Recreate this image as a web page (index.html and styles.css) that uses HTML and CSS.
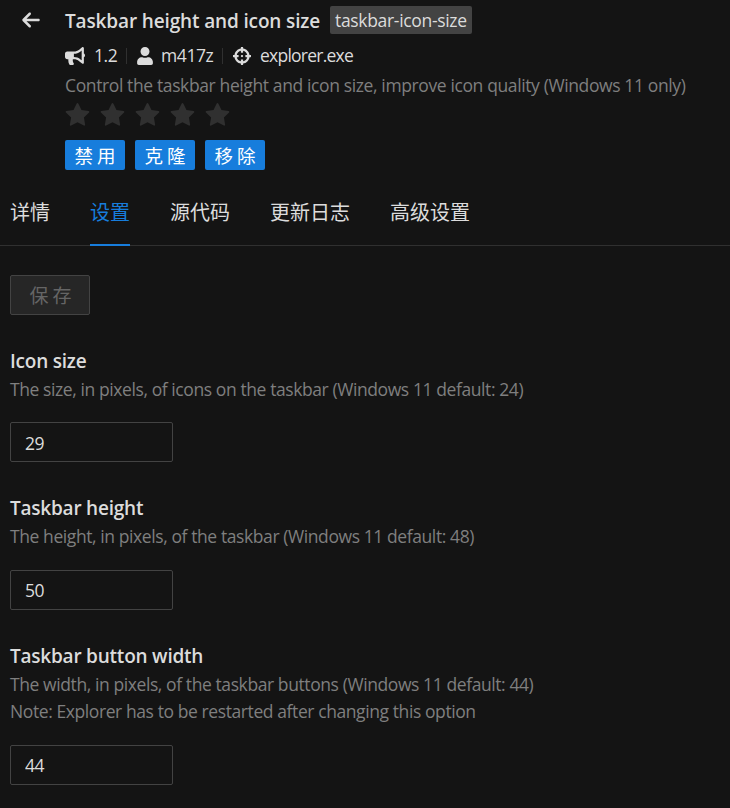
FILE: index.html
```html
<!DOCTYPE html>
<html lang="zh-CN">
<head>
<meta charset="utf-8">
<title>Taskbar height and icon size</title>
<link rel="stylesheet" href="styles.css">
</head>
<body>
<svg class="defs" aria-hidden="true">
  <symbol id="star" viewBox="64 64 896 896"><path d="M908.1 353.1l-253.9-36.9L540.7 86.1c-3.1-6.3-8.2-11.4-14.5-14.5-15.8-7.8-35-1.3-42.9 14.5L369.8 316.2l-253.9 36.9c-7 1-13.4 4.3-18.3 9.3a32.05 32.05 0 00.6 45.3l183.7 179.1-43.4 252.9a31.95 31.95 0 0046.4 33.7L512 754l227.1 119.4c6.2 3.3 13.4 4.4 20.3 3.2 17.4-3 29.1-19.5 26.1-36.9l-43.4-252.9 183.7-179.1c5-4.9 8.3-11.3 9.3-18.3 2.7-17.5-9.5-33.7-27-36.3z"/></symbol>
</svg>
<header class="header">
  <a class="back"><svg viewBox="0 0 448 512"><path d="M9.4 233.4c-12.5 12.5-12.5 32.8 0 45.3l160 160c12.5 12.5 32.8 12.5 45.3 0s12.5-32.8 0-45.3L109.2 288 416 288c17.7 0 32-14.3 32-32s-14.3-32-32-32l-306.7 0L214.6 118.6c12.5-12.5 12.5-32.8 0-45.3s-32.8-12.5-45.3 0l-160 160z"/></svg></a>
  <div class="info">
    <div class="title-row"><h1 class="title">Taskbar height and icon size</h1><span class="mod-id">taskbar-icon-size</span></div>
    <div class="meta">
      <svg class="icon icon-version" viewBox="0 0 576 512"><path d="M576 240c0-23.63-12.95-44.04-32-55.12V32.01C544 23.26 537.02 0 512 0c-7.12 0-14.19 2.38-19.98 7.02l-85.03 68.03C364.28 109.19 310.66 128 256 128H64c-35.35 0-64 28.65-64 64v96c0 35.35 28.65 64 64 64h33.7c-1.39 10.48-2.18 21.14-2.18 32 0 39.77 9.26 77.35 25.56 110.94 5.19 10.69 16.52 17.06 28.4 17.06h74.28c26.05 0 41.69-29.84 25.9-50.56-16.4-21.52-26.15-48.36-26.15-77.44 0-11.11 1.62-21.79 4.41-32H256c54.66 0 108.28 18.81 150.98 52.95l85.03 68.03a32.023 32.023 0 0 0 19.98 7.02c24.92 0 32-22.78 32-32V295.13C563.05 284.04 576 263.63 576 240zm-96 141.42l-33.05-26.44C392.95 311.78 325.12 288 256 288v-96c69.12 0 136.95-23.78 190.95-66.98L480 98.58v282.84z"/></svg>
      <span class="version">1.2</span><i class="divider"></i>
      <svg class="icon icon-user" viewBox="0 0 448 512"><path d="M224 256c70.7 0 128-57.3 128-128S294.7 0 224 0 96 57.3 96 128s57.3 128 128 128zm89.6 32h-16.7c-22.2 10.2-46.9 16-72.9 16s-50.6-5.8-72.9-16h-16.7C60.2 288 0 348.2 0 422.4V464c0 26.5 21.5 48 48 48h352c26.5 0 48-21.5 48-48v-41.6c0-74.2-60.2-134.4-134.4-134.4z"/></svg>
      <span class="author">m417z</span><i class="divider"></i>
      <svg class="icon icon-target" viewBox="0 0 512 512"><path d="M500 224h-30.364C455.724 130.325 381.675 56.276 288 42.364V12c0-6.627-5.373-12-12-12h-40c-6.627 0-12 5.373-12 12v30.364C130.325 56.276 56.276 130.325 42.364 224H12c-6.627 0-12 5.373-12 12v40c0 6.627 5.373 12 12 12h30.364C56.276 381.675 130.325 455.724 224 469.636V500c0 6.627 5.373 12 12 12h40c6.627 0 12-5.373 12-12v-30.364C381.675 455.724 455.724 381.675 469.636 288H500c6.627 0 12-5.373 12-12v-40c0-6.627-5.373-12-12-12zM288 404.634V364c0-6.627-5.373-12-12-12h-40c-6.627 0-12 5.373-12 12v40.634C165.826 392.232 119.783 346.243 107.366 288H148c6.627 0 12-5.373 12-12v-40c0-6.627-5.373-12-12-12h-40.634C119.768 165.826 165.757 119.783 224 107.366V148c0 6.627 5.373 12 12 12h40c6.627 0 12-5.373 12-12v-40.634C346.174 119.768 392.217 165.757 404.634 224H364c-6.627 0-12 5.373-12 12v40c0 6.627 5.373 12 12 12h40.634C392.232 346.174 346.243 392.217 288 404.634zM288 256c0 17.673-14.327 32-32 32s-32-14.327-32-32c0-17.673 14.327-32 32-32s32 14.327 32 32z"/></svg>
      <span class="process">explorer.exe</span>
    </div>
    <p class="description">Control the taskbar height and icon size, improve icon quality (Windows 11 only)</p>
    <div class="rating"><svg><use href="#star"/></svg><svg><use href="#star"/></svg><svg><use href="#star"/></svg><svg><use href="#star"/></svg><svg><use href="#star"/></svg></div>
    <div class="actions"><button class="btn">禁用</button><button class="btn">克隆</button><button class="btn">移除</button></div>
  </div>
</header>
<nav class="tabs"><a class="tab">详情</a><a class="tab active">设置</a><a class="tab">源代码</a><a class="tab">更新日志</a><a class="tab">高级设置</a></nav>
<main class="settings">
  <button class="save" disabled>保存</button>
  <section class="setting">
    <h2 class="name">Icon size</h2>
    <p class="help">The size, in pixels, of icons on the taskbar (Windows 11 default: 24)</p>
    <input class="number" value="29">
  </section>
  <section class="setting">
    <h2 class="name">Taskbar height</h2>
    <p class="help">The height, in pixels, of the taskbar (Windows 11 default: 48)</p>
    <input class="number" value="50">
  </section>
  <section class="setting">
    <h2 class="name">Taskbar button width</h2>
    <p class="help">The width, in pixels, of the taskbar buttons (Windows 11 default: 44)<br>Note: Explorer has to be restarted after changing this option</p>
    <input class="number" value="44">
  </section>
</main>
</body>
</html>
```
FILE: styles.css
```css
* { box-sizing: border-box; }
body {
  margin: 0;
  height: 808px;
  overflow: hidden;
  background: #141414;
  color: #dcdcdc;
  font: 17.5px/27.5px "Open Sans", "Noto Sans CJK SC", sans-serif;
}
h1, h2, p { margin: 0; }
svg { display: block; fill: currentColor; }
button, input { font-family: inherit; }
.defs { display: none; }
.header { display: flex; height: 180px; padding: 6px 10px 0; }
.back { width: 55px; padding: 4px 0 0 12px; }
.back svg { width: 18px; height: 20px; }
.title-row { display: flex; align-items: center; height: 28px; gap: 10px; }
.title { width: 255px; padding-top: 2px; font-size: 19px; font-weight: 600; line-height: 28px; letter-spacing: -.14px; white-space: nowrap; }
.mod-id { width: 142px; height: 28px; padding: 0 0 0 5px; border-radius: 2px; background: #434343; font-size: 17.5px; line-height: 28px; letter-spacing: -.32px; white-space: nowrap; }
.meta { display: flex; align-items: center; height: 28px; margin-top: 8px; font-size: 17.5px; letter-spacing: -.4px; }
.icon { height: 18px; flex: none; }
.icon-version { width: 20px; margin-right: 9px; }
.icon-user { width: 16px; margin-right: 8px; }
.icon-target { width: 18px; margin-right: 9px; }
.version { width: 23px; }
.author { width: 52px; }
.process { letter-spacing: -.76px; }
.divider { width: 1px; height: 16px; margin: 0 10px 0 9px; background: #303030; }
.description { margin-top: 2px; color: #7f7f7f; font-size: 17.5px; letter-spacing: -.38px; white-space: nowrap; }
.rating { display: flex; gap: 10px; height: 25px; margin-top: 3px; color: #303030; }
.rating svg { width: 25px; height: 25px; }
.actions { display: flex; gap: 10px; margin-top: 12px; }
.btn { width: 60px; height: 30px; padding: 2px 0 0 4px; border: 0; border-radius: 2px; background: #177ddc; color: #fff; font-size: 18.5px; line-height: 28px; letter-spacing: 4px; }
.tabs { display: flex; gap: 40px; height: 66px; padding: 0 10px; border-bottom: 1px solid #303030; font-size: 20px; }
.tab { height: 66px; padding-top: 19px; }
.tab.active { border-bottom: 2px solid #177ddc; color: #177ddc; }
.settings { padding: 29px 10px 0; }
.save { display: block; width: 80px; height: 40px; padding: 0 0 0 5px; border: 1px solid #434343; border-radius: 2px; background: #262626; color: #656565; font-size: 19px; letter-spacing: 4px; }
.setting { padding-top: 32px; }
.setting + .setting { padding-top: 32.1px; }
.name { font-size: 19px; font-weight: 600; line-height: 28.4px; letter-spacing: -.22px; }
.help { padding-top: .4px; color: #7f7f7f; font-size: 17.5px; letter-spacing: -.41px; white-space: nowrap; }
.number { display: block; width: 163px; height: 40px; margin-top: 19.1px; padding: 1px 14px 0; border: 1px solid #434343; border-radius: 2px; outline: 0; background: transparent; color: #dcdcdc; font-size: 17.5px; letter-spacing: -.4px; }
```
